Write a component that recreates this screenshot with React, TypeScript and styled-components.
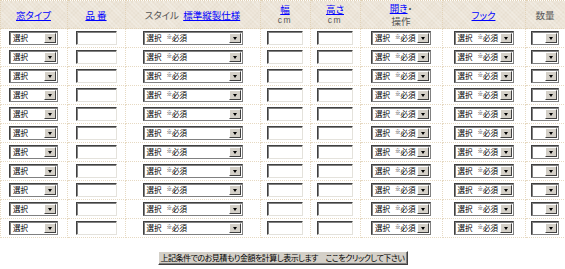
import React from "react";
import styled, { createGlobalStyle } from "styled-components";

const GlobalStyle = createGlobalStyle`
  html, body {
    margin: 0;
    padding: 0;
    background: #ffffff;
  }
  body {
    font-family: "Noto Sans CJK JP", "Liberation Sans", sans-serif;
    color: #333333;
  }
`;

const StyledPageWrapper = styled.div`
  width: 565px;
  display: flex;
  flex-direction: column;
  align-items: center;
`;

const StyledTable = styled.table`
  width: 565px;
  table-layout: fixed;
  border-collapse: collapse;
`;

const StyledRow = styled.tr<{ $height: number }>`
  height: ${({ $height }) => $height}px;
`;

const StyledHeadCell = styled.th`
  padding: 0;
  border: 1px dotted #e2d3b8;
  background-color: #ece4d7;
  background-image: repeating-linear-gradient(
      45deg,
      rgba(255, 255, 255, 0.35) 0 1px,
      transparent 1px 3px
    ),
    repeating-linear-gradient(
      -45deg,
      rgba(200, 185, 160, 0.18) 0 1px,
      transparent 1px 3px
    );
  font-weight: normal;
  font-size: 9.5px;
  line-height: 12px;
  color: #555555;
  text-align: center;
  vertical-align: middle;
  font-feature-settings: "palt";
`;

const StyledCell = styled.td`
  padding: 0;
  border: 1px dotted #e6d9c2;
  text-align: center;
  vertical-align: middle;
`;

const StyledLink = styled.a`
  color: #0000ff;
  text-decoration: underline;
  cursor: pointer;
`;

const StyledLine = styled.div`
  line-height: 13px;
`;

const StyledUnit = styled.div`
  font-family: "Liberation Sans", sans-serif;
  font-size: 8.5px;
  line-height: 11px;
  letter-spacing: 1.5px;
  color: #555555;
`;

const StyledSelectBox = styled.div<{ $width: number }>`
  box-sizing: border-box;
  width: ${({ $width }) => $width}px;
  height: 14px;
  margin: 0 auto;
  display: flex;
  align-items: stretch;
  background: #ffffff;
  border: 1px solid;
  border-color: #404040 #808080 #808080 #404040;
  box-shadow: inset 1px 1px 0 #808080;
  padding: 1px;
`;

const StyledSelectText = styled.span`
  flex: 1;
  display: flex;
  align-items: center;
  padding-left: 2px;
  font-size: 7.5px;
  line-height: 1;
  color: #000000;
  white-space: nowrap;
  overflow: hidden;
  text-align: left;
`;

const StyledMark = styled.span`
  font-size: 5.5px;
  margin-left: 5px;
`;

const StyledArrow = styled.span`
  box-sizing: border-box;
  width: 12px;
  flex: 0 0 12px;
  background: #d4d0c8;
  border: 1px solid;
  border-color: #ffffff #404040 #404040 #ffffff;
  display: flex;
  align-items: center;
  justify-content: center;
  &::after {
    content: "";
    width: 0;
    height: 0;
    border-left: 2.5px solid transparent;
    border-right: 2.5px solid transparent;
    border-top: 3px solid #000000;
  }
`;

const StyledInput = styled.div<{ $width: number }>`
  box-sizing: border-box;
  width: ${({ $width }) => $width}px;
  height: 14px;
  margin: 0 auto;
  background: #ffffff;
  border: 1px solid;
  border-color: #404040 #e4e2dc #e4e2dc #404040;
  box-shadow: inset 1px 1px 0 #808080;
`;

const StyledSubmit = styled.button`
  margin-top: 13px;
  width: 250px;
  height: 14px;
  padding: 0;
  background: #d4d0c8;
  border: 1px solid;
  border-color: #ffffff #404040 #404040 #ffffff;
  box-shadow: inset -1px -1px 0 #808080;
  font-family: "Noto Sans CJK JP", sans-serif;
  font-size: 8px;
  letter-spacing: -0.5px;
  line-height: 1;
  color: #000000;
  font-feature-settings: "palt";
  white-space: nowrap;
  display: flex;
  align-items: center;
  justify-content: center;
`;

const COLUMNS = [67, 58, 135, 50, 50, 82, 83, 40];
const ROWS = Array.from({ length: 11 }, (_, i) => i);

function FakeSelect({ width, label }: { width: number; label?: boolean | "short" }) {
  return (
    <StyledSelectBox $width={width}>
      <StyledSelectText>
        {label && "選択"}
        {label === true && (
          <>
            <StyledMark>※</StyledMark>必須
          </>
        )}
      </StyledSelectText>
      <StyledArrow />
    </StyledSelectBox>
  );
}

export default function App() {
  return (
    <StyledPageWrapper>
      <GlobalStyle />
      <StyledTable>
        <colgroup>
          {COLUMNS.map((w, i) => (
            <col key={i} style={{ width: w }} />
          ))}
        </colgroup>
        <thead>
          <StyledRow $height={28}>
            <StyledHeadCell>
              <StyledLink>窓タイプ</StyledLink>
            </StyledHeadCell>
            <StyledHeadCell>
              <StyledLink>品 番</StyledLink>
            </StyledHeadCell>
            <StyledHeadCell>
              スタイル&nbsp;&nbsp;<StyledLink>標準縦製仕様</StyledLink>
            </StyledHeadCell>
            <StyledHeadCell>
              <StyledLink>幅</StyledLink>
              <StyledUnit>cm</StyledUnit>
            </StyledHeadCell>
            <StyledHeadCell>
              <StyledLink>高さ</StyledLink>
              <StyledUnit>cm</StyledUnit>
            </StyledHeadCell>
            <StyledHeadCell>
              <StyledLine>
                <StyledLink>開き</StyledLink>・
              </StyledLine>
              <StyledLine>操作</StyledLine>
            </StyledHeadCell>
            <StyledHeadCell>
              <StyledLink>フック</StyledLink>
            </StyledHeadCell>
            <StyledHeadCell>数量</StyledHeadCell>
          </StyledRow>
        </thead>
        <tbody>
          {ROWS.map((r) => (
            <StyledRow key={r} $height={19}>
              <StyledCell>
                <FakeSelect width={49} label="short" />
              </StyledCell>
              <StyledCell>
                <StyledInput $width={41} />
              </StyledCell>
              <StyledCell>
                <FakeSelect width={100} label />
              </StyledCell>
              <StyledCell>
                <StyledInput $width={36} />
              </StyledCell>
              <StyledCell>
                <StyledInput $width={36} />
              </StyledCell>
              <StyledCell>
                <FakeSelect width={60} label />
              </StyledCell>
              <StyledCell>
                <FakeSelect width={60} label />
              </StyledCell>
              <StyledCell>
                <FakeSelect width={28} />
              </StyledCell>
            </StyledRow>
          ))}
        </tbody>
      </StyledTable>
      <StyledSubmit>上記条件でのお見積もり金額を計算し表示します　ここをクリックして下さい</StyledSubmit>
    </StyledPageWrapper>
  );
}
